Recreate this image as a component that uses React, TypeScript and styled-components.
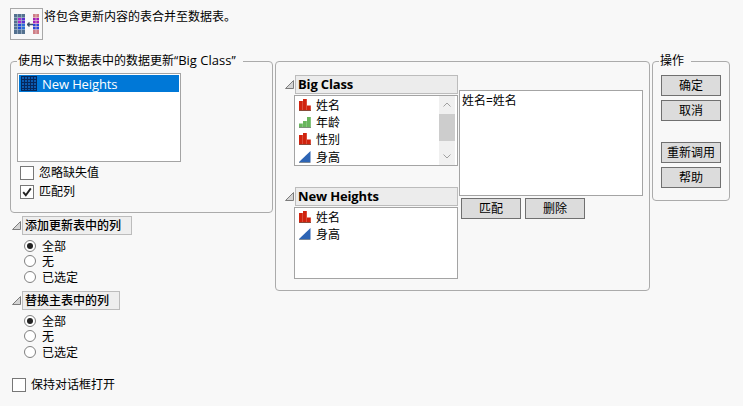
import React from "react";
import styled, { createGlobalStyle } from "styled-components";

const Global = createGlobalStyle`
  html, body { margin: 0; padding: 0; background: #f8f8f8; }
  body { width: 743px; height: 406px; overflow: hidden; font-family: "Open Sans", "Noto Sans CJK SC", sans-serif; font-size: 12px; color: #000; }
`;

const Page = styled.div`
  display: flex;
  flex-direction: column;
  padding: 8px 0 0 10px;
`;
const Intro = styled.div`
  display: flex;
  height: 32px;
  line-height: 18px;
`;
const IconBox = styled.div`
  width: 33px;
  height: 32px;
  box-sizing: border-box;
  border: 1px solid #a8a8a8;
  margin-right: 1px;
  display: flex;
  align-items: center;
  justify-content: center;
`;
const Columns = styled.div`
  display: flex;
  margin-top: 21px;
  align-items: flex-start;
`;
const LeftColumn = styled.div`
  width: 263px;
  margin-right: 2px;
  display: flex;
  flex-direction: column;
`;
const Group = styled.div<{ $w: number; $h: number; $ml?: number }>`
  position: relative;
  box-sizing: border-box;
  width: ${p => p.$w}px;
  height: ${p => p.$h}px;
  margin-left: ${p => p.$ml ?? 0}px;
  border: 1px solid #ababab;
  border-radius: 4px;
`;
const Legend = styled.span`
  position: absolute;
  left: 6px;
  top: -10px;
  padding: 0 7px 0 1px;
  line-height: 17px;
  background: #f8f8f8;
  white-space: nowrap;
`;
const Latin = styled.span`
  font-size: 13px;
`;
const SourceBody = styled.div`
  display: flex;
  flex-direction: column;
  padding: 11px 0 0 6px;
`;
const ListBox = styled.div<{ $w: number; $h: number }>`
  box-sizing: border-box;
  width: ${p => p.$w}px;
  height: ${p => p.$h}px;
  border: 1px solid #a4a4a4;
  background: #fff;
  display: flex;
  flex-direction: column;
`;
const SelectedRow = styled.div`
  margin: 1px 1px 0;
  height: 17px;
  background: #0078d7;
  color: #fff;
  display: flex;
  align-items: center;
  gap: 5px;
  padding-left: 2px;
  font-size: 13px;
  letter-spacing: -0.1px;
`;
const CheckRow = styled.label<{ $mt?: number; $ml?: number }>`
  display: flex;
  align-items: center;
  height: 14px;
  margin-top: ${p => p.$mt ?? 0}px;
  margin-left: ${p => p.$ml ?? 0}px;
  gap: 5px;
  line-height: 14px;
`;
const Check = styled.span`
  box-sizing: border-box;
  width: 14px;
  height: 14px;
  border: 1px solid #777;
  background: #fff;
  display: flex;
  align-items: center;
  justify-content: center;
`;
const Outline = styled.div<{ $mt: number }>`
  display: flex;
  align-items: center;
  margin-top: ${p => p.$mt}px;
  margin-left: 2px;
`;
const Triangle = styled.svg`
  width: 9px;
  height: 9px;
  margin-right: 1px;
  flex: none;
`;
const OutlineTitle = styled.div<{ $w: number }>`
  box-sizing: border-box;
  width: ${p => p.$w}px;
  height: 19px;
  background: #eeeeee;
  border: 1px solid #bcbcbc;
  padding-left: 2px;
  line-height: 17px;
  font-weight: 500;
  white-space: nowrap;
`;
const RadioList = styled.div`
  display: flex;
  flex-direction: column;
  padding: 3px 0 0 14px;
`;
const RadioRow = styled.div`
  display: flex;
  align-items: center;
  height: 15.6px;
  gap: 6px;
`;
const Radio = styled.span<{ $on?: boolean }>`
  box-sizing: border-box;
  width: 12px;
  height: 12px;
  border-radius: 50%;
  border: 1px solid #808080;
  background: #fff;
  display: flex;
  align-items: center;
  justify-content: center;
  &::after {
    content: "";
    width: 6px;
    height: 6px;
    border-radius: 50%;
    background: ${p => (p.$on ? "#222" : "transparent")};
  }
`;
const ColumnsPanel = styled.div`
  display: flex;
  padding: 13px 0 0 9px;
`;
const TablesColumn = styled.div`
  display: flex;
  flex-direction: column;
  width: 174px;
`;
const TableOutline = styled.div<{ $mt?: number }>`
  display: flex;
  flex-direction: column;
  margin-top: ${p => p.$mt ?? 0}px;
`;
const TableTitleRow = styled.div`
  display: flex;
  align-items: center;
  height: 19px;
`;
const TableTitle = styled.div`
  box-sizing: border-box;
  width: 163px;
  height: 19px;
  background: #ececec;
  border: 1px solid #bcbcbc;
  padding-left: 2px;
  line-height: 17px;
  font-size: 13px;
  font-weight: 700;
  letter-spacing: -0.15px;
`;
const ColumnList = styled.div<{ $h: number }>`
  box-sizing: border-box;
  width: 164px;
  height: ${p => p.$h}px;
  margin: 1px 0 0 9px;
  border: 1px solid #a4a4a4;
  background: #fff;
  display: flex;
  justify-content: space-between;
`;
const Rows = styled.div`
  display: flex;
  flex-direction: column;
  padding: 0 0 0 4px;
`;
const ColRow = styled.div`
  display: flex;
  align-items: center;
  height: 17.4px;
  gap: 5px;
`;
const ScrollBar = styled.div`
  width: 16px;
  margin: 0 2px 0 0;
  background: #f0f0f0;
  display: flex;
  flex-direction: column;
  align-items: center;
  justify-content: space-between;
  height: 69px;
  position: relative;
`;
const ScrollThumb = styled.div`
  position: absolute;
  top: 18px;
  left: 0;
  width: 16px;
  height: 27px;
  background: #cdcdcd;
`;
const ScrollArrow = styled.svg`
  width: 8px;
  height: 5px;
  margin: 6px 0;
`;
const MatchColumn = styled.div`
  display: flex;
  flex-direction: column;
  margin-top: 15px;
`;
const MatchList = styled.div`
  box-sizing: border-box;
  width: 184px;
  height: 106px;
  border: 1px solid #a4a4a4;
  background: #fff;
  padding: 2px 2px;
  line-height: 16px;
`;
const MatchButtons = styled.div`
  display: flex;
  gap: 4px;
  margin: 2px 0 0 2px;
`;
const Button = styled.button<{ $mt?: number }>`
  box-sizing: border-box;
  width: 60px;
  height: 21px;
  padding: 0;
  margin-top: ${p => p.$mt ?? 0}px;
  background: #dcdcdc;
  border: 1px solid #707070;
  border-radius: 0;
  font: inherit;
  line-height: 17px;
  color: #000;
`;
const ActionsStack = styled.div`
  display: flex;
  flex-direction: column;
  padding: 13px 0 0 8px;
`;

const Nominal = () => (
  <svg width="12" height="12" viewBox="0 0 12 12">
    <rect x="0" y="2" width="3.8" height="10" fill="#d0230e" />
    <rect x="4" y="0" width="3.8" height="12" fill="#d0230e" />
    <rect x="8" y="6.5" width="3.8" height="5.5" fill="#d0230e" />
    <rect x="0" y="11" width="12" height="1" fill="#8a4a3a" />
  </svg>
);
const Ordinal = () => (
  <svg width="12" height="12" viewBox="0 0 12 12">
    <rect x="0" y="7.5" width="3.8" height="4.5" fill="#68b55c" />
    <rect x="4" y="5" width="3.8" height="7" fill="#68b55c" />
    <rect x="8" y="1" width="3.8" height="11" fill="#68b55c" />
    <rect x="0" y="11" width="12" height="1" fill="#7d8f7a" />
  </svg>
);
const Continuous = () => (
  <svg width="12" height="12" viewBox="0 0 12 12">
    <polygon points="0,11 11.5,0 11.5,11" fill="#2d64b4" />
    <rect x="0" y="11" width="11.5" height="1" fill="#7a8898" />
  </svg>
);
const Corner = () => (
  <Triangle viewBox="0 0 9 9">
    <polygon points="0.5,8.5 8.5,0.5 8.5,8.5" fill="#d4d4d4" stroke="#7c7c7c" />
  </Triangle>
);
const TableGlyph = () => (
  <svg width="16" height="15" viewBox="0 0 16 15">
    <rect x="0" y="0" width="16" height="15" fill="#0b5bb0" />
    <path d="M0.5 0V15M3.5 0V15M6.5 0V15M9.5 0V15M12.5 0V15M15.5 0V15M0 0.5H16M0 3.5H16M0 6.5H16M0 9.5H16M0 12.5H16M0 14.5H16" stroke="#06285c" strokeWidth="1" fill="none" />
  </svg>
);
const Tick = () => (
  <svg width="10" height="10" viewBox="0 0 10 10">
    <path d="M1.2 5.2 L3.8 8.2 L8.8 1.4" stroke="#222" strokeWidth="1.9" fill="none" />
  </svg>
);
const UpdateIcon = () => (
  <svg width="25" height="20" viewBox="0 0 25 20">
    <rect x="0" y="0" width="11" height="20" fill="#54718f" />
    <rect x="4" y="4" width="3.5" height="6" fill="#b028c8" />
    <rect x="7.5" y="4" width="3.5" height="6" fill="#5a30d0" />
    <rect x="4" y="10" width="3.5" height="6" fill="#1f48e0" />
    <rect x="7.5" y="10" width="3.5" height="6" fill="#2a70d8" />
    <path d="M0 3.5H11M0 6.5H11M0 9.5H11M0 12.5H11M0 15.5H11M3.5 0V20M7.5 0V20" stroke="#a8bace" strokeWidth="0.7" />
    <rect x="19" y="0" width="6" height="20" fill="#cf7f86" />
    <rect x="19" y="4" width="6" height="6" fill="#a020b8" />
    <rect x="19" y="10" width="6" height="6" fill="#2848d8" />
    <path d="M19 3.5H25M19 6.5H25M19 9.5H25M19 12.5H25M19 15.5H25M22 0V20" stroke="#e6ccd2" strokeWidth="0.7" />
    <path d="M13 10.5H19M13.5 10.5L15.5 8.5M13.5 10.5L15.5 12.5" stroke="#3c5066" strokeWidth="1.4" fill="none" />
  </svg>
);

const RadioOptions = () => (
  <RadioList>
    <RadioRow><Radio $on />全部</RadioRow>
    <RadioRow><Radio />无</RadioRow>
    <RadioRow><Radio />已选定</RadioRow>
  </RadioList>
);

export default function App() {
  return (
    <Page>
      <Global />
      <Intro>
        <IconBox><UpdateIcon /></IconBox>
        <span>将包含更新内容的表合并至数据表。</span>
      </Intro>
      <Columns>
        <LeftColumn>
          <Group $w={263} $h={152}>
            <Legend>使用以下数据表中的数据更新“<Latin>Big Class</Latin>”</Legend>
            <SourceBody>
              <ListBox $w={164} $h={89}>
                <SelectedRow><TableGlyph />New Heights</SelectedRow>
              </ListBox>
              <CheckRow $mt={4} $ml={3}><Check />忽略缺失值</CheckRow>
              <CheckRow $mt={5} $ml={3}><Check><Tick /></Check>匹配列</CheckRow>
            </SourceBody>
          </Group>
          <Outline $mt={3}><Corner /><OutlineTitle $w={110}>添加更新表中的列</OutlineTitle></Outline>
          <RadioOptions />
          <Outline $mt={6}><Corner /><OutlineTitle $w={98}>替换主表中的列</OutlineTitle></Outline>
          <RadioOptions />
          <CheckRow $mt={18} $ml={2}><Check />保持对话框打开</CheckRow>
        </LeftColumn>
        <Group $w={375} $h={230}>
          <ColumnsPanel>
            <TablesColumn>
              <TableOutline>
                <TableTitleRow><Corner /><TableTitle>Big Class</TableTitle></TableTitleRow>
                <ColumnList $h={71}>
                  <Rows>
                    <ColRow><Nominal />姓名</ColRow>
                    <ColRow><Ordinal />年龄</ColRow>
                    <ColRow><Nominal />性别</ColRow>
                    <ColRow><Continuous />身高</ColRow>
                  </Rows>
                  <ScrollBar>
                    <ScrollArrow viewBox="0 0 8 5"><path d="M0.5 4.5L4 1L7.5 4.5" stroke="#a0a0a0" fill="none" /></ScrollArrow>
                    <ScrollThumb />
                    <ScrollArrow viewBox="0 0 8 5"><path d="M0.5 0.5L4 4L7.5 0.5" stroke="#a0a0a0" fill="none" /></ScrollArrow>
                  </ScrollBar>
                </ColumnList>
              </TableOutline>
              <TableOutline $mt={21}>
                <TableTitleRow><Corner /><TableTitle>New Heights</TableTitle></TableTitleRow>
                <ColumnList $h={72}>
                  <Rows>
                    <ColRow><Nominal />姓名</ColRow>
                    <ColRow><Continuous />身高</ColRow>
                  </Rows>
                </ColumnList>
              </TableOutline>
            </TablesColumn>
            <MatchColumn>
              <MatchList>姓名=姓名</MatchList>
              <MatchButtons>
                <Button>匹配</Button>
                <Button>删除</Button>
              </MatchButtons>
            </MatchColumn>
          </ColumnsPanel>
        </Group>
        <Group $w={78} $h={140} $ml={2}>
          <Legend>操作</Legend>
          <ActionsStack>
            <Button>确定</Button>
            <Button $mt={4}>取消</Button>
            <Button $mt={21}>重新调用</Button>
            <Button $mt={4}>帮助</Button>
          </ActionsStack>
        </Group>
      </Columns>
    </Page>
  );
}
